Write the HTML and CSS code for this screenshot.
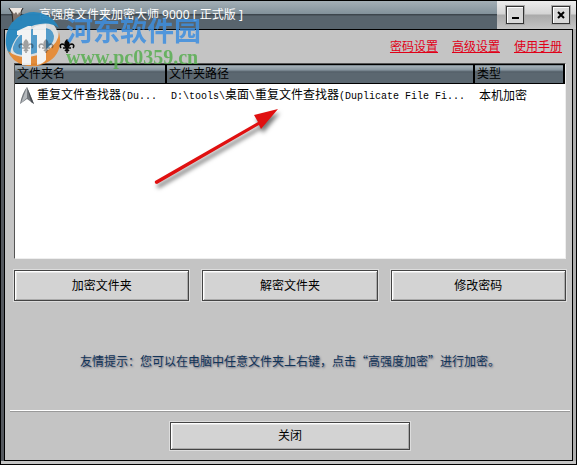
FILE: index.html
```html
<!DOCTYPE html>
<html lang="zh-CN">
<head>
    <meta charset="UTF-8">
    <meta name="viewport" content="width=device-width, initial-scale=1.0">
    <title>高强度文件夹加密大师 9000</title>
    <link rel="stylesheet" href="styles.css">
</head>
<body>
    <div class="window">
        <header class="titlebar">
            <div class="caption">
                <svg class="app-icon" width="16" height="16" viewBox="0 0 16 16">
                    <path d="M1 1h14l-2 3-1 11H5L4 5z" fill="#7d716a"/>
                    <path d="M1 1h14l-2 2v5l-2-3-1 3-2-3-2 2-2-3z" fill="#eee8e2"/>
                    <path d="M1 1l3 5 1 9M15 1l-2 4v9" fill="none" stroke="#292522"/>
                </svg>
                <h1>高强度文件夹加密大师 9000 [ 正式版 ]</h1>
            </div>
            <div class="controls">
                <button class="control" aria-label="最小化">
                    <svg width="12" height="12" viewBox="0 0 12 12"><path d="M3 9h7" stroke="#000" stroke-width="2"/></svg>
                </button>
                <button class="control" aria-label="关闭窗口">
                    <svg width="12" height="12" viewBox="0 0 12 12"><path d="M3 3l6 6M9 3l-6 6" stroke="#000" stroke-width="2"/></svg>
                </button>
            </div>
        </header>

        <main class="client">
            <nav class="links">
                <a href="#">密码设置</a>
                <a href="#">高级设置</a>
                <a href="#">使用手册</a>
            </nav>

            <div class="list">
                <table>
                    <colgroup>
                        <col class="col-name">
                        <col class="col-path">
                        <col class="col-type">
                    </colgroup>
                    <thead>
                        <tr><th>文件夹名</th><th>文件夹路径</th><th>类型</th></tr>
                    </thead>
                    <tbody>
                        <tr>
                            <td>
                                <div class="name">
                                    <svg width="14" height="18" viewBox="0 0 14 18">
                                        <path d="M7 0l7 17-7-5-7 5Q2 6 7 0z" fill="#73787e"/>
                                        <path d="M7 0L1 16l6-5z" fill="#b4b8bc"/>
                                        <path d="M7 0l7 17-3-2z" fill="#484d53"/>
                                    </svg>
                                    <span>重复文件查找器<span class="latin">(Du...</span></span>
                                </div>
                            </td>
                            <td><span class="latin">D:\tools\</span>桌面<span class="latin">\</span>重复文件查找器<span class="latin">(Duplicate File Fi...</span></td>
                            <td>本机加密</td>
                        </tr>
                    </tbody>
                </table>
            </div>

            <div class="actions">
                <button class="btn">加密文件夹</button>
                <button class="btn">解密文件夹</button>
                <button class="btn">修改密码</button>
            </div>

            <p class="hint">友情提示：您可以在电脑中任意文件夹上右键，点击“高强度加密”进行加密。</p>

            <footer class="footer">
                <button class="btn btn-close">关闭</button>
            </footer>
        </main>

        <svg class="arrow" width="132" height="84" viewBox="0 0 132 84">
            <path d="M5 76L108 17l-4-7 24-6-17 20-2-4L7 79q-3 0-2-3z" fill="#e01010"/>
        </svg>

        <div class="watermark">
            <svg class="logo" width="72" height="58" viewBox="0 0 72 58">
                <defs>
                    <g id="fleur">
                        <path d="M7 0q5 4 1 9H6Q2 4 7 0z"/>
                        <path d="M6 9Q5 5 2 5-1 6 1 9M8 9q1-4 4-4 3 1 1 4M3 9h8M7 9v5M5 12l2-2 2 2" fill="none" stroke="#000" stroke-width="1.6"/>
                    </g>
                </defs>
                <ellipse cx="29" cy="29" rx="26" ry="25" fill="#dfe1e1"/>
                <path d="M2 34Q0 17 13 7 27-3 42 4q9 4 13 13-8-6-19-4Q14 16 7 38q-1 3 0 7-4-4-5-11z" fill="#2787bf"/>
                <path d="M55 21q5 22-13 31-17 8-32-3-4-4-6-9 9 7 21 6 18-2 27-15 3-5 3-10z" fill="#e68b35"/>
                <path d="M9 36q5-16 24-19 16-2 17 8 0 11-15 16-13 5-22 2-5-2-4-7z" fill="#4d9acb"/>
                <path d="M13 20l11-5h3v39h-9V24h-5zM32 15l10-2v36q-3 4-9 5V24h-4v-7z" fill="#f5f6f6"/>
                <use href="#fleur" x="15" y="28" opacity=".35"/>
                <use href="#fleur" x="35" y="28" opacity=".35"/>
                <use href="#fleur" x="56" y="28"/>
            </svg>
            <div class="site">
                <div class="site-name">河东软件园</div>
                <div class="site-url">www.pc0359.cn</div>
            </div>
        </div>
    </div>
</body>
</html>
```
FILE: styles.css
```css
* {
    margin: 0;
    padding: 0;
    box-sizing: border-box;
}

body {
    font-family: "Liberation Sans", "Noto Sans CJK SC", sans-serif;
    font-size: 12px;
    line-height: 16px;
    color: #000;
}

button {
    font: inherit;
    color: inherit;
}

.window {
    position: relative;
    display: flex;
    flex-direction: column;
    min-height: 100vh;
    background: #c4c4c4;
    border: 1px solid #000;
}

.titlebar {
    display: flex;
    height: 28px;
}

.caption {
    flex: 1;
    display: flex;
    align-items: center;
    gap: 15px;
    padding-left: 7px;
    color: #fff;
    background: linear-gradient(#a3afb6, #82919a 13px, #3d464d 13px, #3d464d 14px, #58646d 15px, #58646d);
}

.caption h1 {
    font-family: "Noto Sans", "Noto Sans CJK SC", sans-serif;
    font-size: 12px;
    font-weight: normal;
}

.controls {
    display: flex;
    align-items: center;
    gap: 28px;
    padding: 0 6px 0 9px;
    background: linear-gradient(#ededed, #d4d4d4 13px, #aaa 14px, #c4c4c4);
}

.control {
    display: grid;
    place-items: center;
    width: 18px;
    height: 18px;
    background: #d8d8d8;
    border: 1px solid #333;
    box-shadow: 0 0 0 1px #aaa, inset 1px 1px #fff;
}

.client {
    flex: 1;
    display: flex;
    flex-direction: column;
    margin: 0 3px 3px;
    padding: 0 6px 0 9px;
    border: 1px solid #000;
    box-shadow: -3px 0 #55595f, 3px 0 #aeaeae;
}

.links {
    display: flex;
    justify-content: flex-end;
    gap: 14px;
    padding: 9px 4px 8px;
}

.links a {
    color: #e00018;
}

.list {
    height: 196px;
    background: #fff;
    border: 1px solid;
    border-color: #555 #eee #eee #555;
}

.list table {
    width: 100%;
    table-layout: fixed;
    border-collapse: collapse;
}

.col-name {
    width: 151px;
}

.col-type {
    width: 90px;
}

.list th {
    height: 19px;
    padding-left: 2px;
    font-weight: normal;
    text-align: left;
    background: linear-gradient(#a9b4bb, #82909a 5px, #4a555d 6px, #5b6770 7px, #5b6770);
    border: 1px solid #000;
    border-width: 1px 2px 1px 0;
}

.list td {
    height: 24px;
    padding-left: 5px;
    white-space: nowrap;
}

.name {
    display: flex;
    align-items: center;
    gap: 3px;
}

.latin {
    font-family: "Liberation Mono", monospace;
    font-size: 10px;
}

.actions {
    display: flex;
    gap: 13px;
    margin-top: 11px;
}

.btn {
    flex: 1;
    height: 31px;
    background: #d3d3d3;
    border: 1px solid #444;
    box-shadow: 0 0 0 1px #ddd, inset 1px 1px #fff, inset -1px -1px #aaa, inset 2px 2px #e6e6e6;
}

.hint {
    flex: 1;
    display: grid;
    place-items: center;
    padding-top: 11px;
    font-family: "Noto Sans CJK SC", sans-serif;
    color: #123458;
    text-shadow: 1px 1px 2px #667;
}

.footer {
    display: flex;
    justify-content: center;
    margin: 0 -4px;
    padding: 11px 0 10px;
    border-top: 1px solid #fff;
    box-shadow: inset 0 1px #999;
}

.btn-close {
    flex: none;
    width: 240px;
    height: 28px;
}

.arrow {
    position: absolute;
    top: 104px;
    left: 149px;
    filter: drop-shadow(2px 4px 2px #777);
    pointer-events: none;
}

.watermark {
    position: absolute;
    top: 10px;
    left: 3px;
    display: flex;
    pointer-events: none;
}

.logo {
    opacity: .95;
}

.site {
    margin-left: -10px;
    white-space: nowrap;
    opacity: .85;
}

.site-name {
    font-size: 27px;
    font-weight: bold;
    line-height: 42px;
    color: #3d8fe0;
}

.site-url {
    font-family: "Liberation Serif", serif;
    font-size: 20px;
    font-weight: bold;
    line-height: 8px;
    color: #59ae52;
}
```
